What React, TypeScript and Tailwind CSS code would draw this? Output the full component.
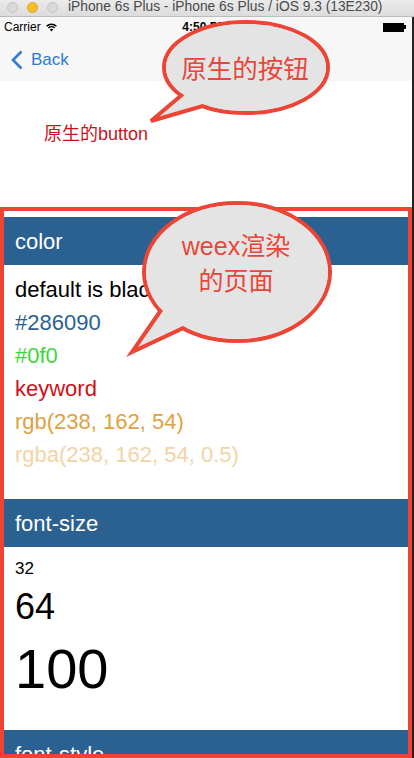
const sans = "font-['Liberation_Sans','Noto_Sans_CJK_SC',sans-serif]";

const colorRows = [
  { text: "default is black", cls: "text-black" },
  { text: "#286090", cls: "text-[#2b6190]" },
  { text: "#0f0", cls: "text-[#3ad83a]" },
  { text: "keyword", cls: "text-[#cf1018]" },
  { text: "rgb(238, 162, 54)", cls: "text-[#dfa142]" },
  { text: "rgba(238, 162, 54, 0.5)", cls: "text-[#f1d4a6]" },
];

const Header = ({ title }: { title: string }) => (
  <div className="h-[48px] bg-[#2b6190] text-white text-[22px] pl-[11px] flex items-center">
    {title}
  </div>
);

const Wifi = () => (
  <svg width="11" height="9" viewBox="0 0 11 9">
    <path d="M0.6 3.2 A7 7 0 0 1 10.4 3.2" stroke="black" strokeWidth="1.5" fill="none" />
    <path d="M2.4 5 A4.5 4.5 0 0 1 8.6 5" stroke="black" strokeWidth="1.5" fill="none" />
    <path d="M5.5 8.6 L3.8 6.6 A2.4 2.4 0 0 1 7.2 6.6 Z" fill="black" />
  </svg>
);

// speech bubbles drawn over the page (annotations)
const Bubbles = () => (
  <svg className="absolute left-0 top-0 pointer-events-none" width="414" height="758" viewBox="0 0 414 758">
    <g>
      <ellipse cx="246" cy="67.5" rx="82" ry="45.5" fill="#e4e4e4" stroke="#ec4535" strokeWidth="4" />
      <polygon points="190,88 151,121 210,104" fill="#e4e4e4" stroke="#ec4535" strokeWidth="4" strokeLinejoin="miter" />
      <ellipse cx="246" cy="67.5" rx="80" ry="43.5" fill="#e4e4e4" />
    </g>
    <g>
      <ellipse cx="237" cy="272" rx="93" ry="69" fill="#e4e4e4" stroke="#ec4535" strokeWidth="4" />
      <polygon points="168,300 132,352 196,322" fill="#e4e4e4" stroke="#ec4535" strokeWidth="4" strokeLinejoin="miter" />
      <ellipse cx="237" cy="272" rx="91" ry="67" fill="#e4e4e4" />
    </g>
  </svg>
);

export default function App() {
  return (
    <div className={`relative w-[414px] h-[758px] overflow-hidden bg-white ${sans}`}>
      {/* MAC TITLE BAR */}
      <div className="h-[17px] bg-gradient-to-b from-[#ebebeb] to-[#dcdcdc] border-b border-[#bcbcbc] flex items-start">
        <div className="h-[14px] flex items-center pl-[7px] gap-[9px]">
          <span className="w-[11px] h-[11px] rounded-full bg-[#d9d9d9] border border-[#c4c4c4]" />
          <span className="w-[11px] h-[11px] rounded-full bg-[#f4be2c] border border-[#dea624]" />
          <span className="w-[11px] h-[11px] rounded-full bg-[#d9d9d9] border border-[#c4c4c4]" />
          <span className="ml-[1px] text-[13.8px] leading-[14px] text-[#4a4a4a] whitespace-nowrap">
            iPhone 6s Plus - iPhone 6s Plus / iOS 9.3 (13E230)
          </span>
        </div>
      </div>

      <div className="flex">
        <div className="w-[412px] flex flex-col">
          {/* STATUS BAR */}
          <div className="h-[20px] bg-[#f7f7f7] flex items-center text-[12px] text-black">
            <div className="flex-1 flex items-center pl-[4px] gap-[5px]">
              <span>Carrier</span>
              <Wifi />
            </div>
            <div className="font-bold">4:50 PM</div>
            <div className="flex-1 flex justify-end items-center pr-[6px]">
              <div className="w-[21px] h-[9px] bg-black" />
              <div className="w-[2px] h-[4px] bg-black" />
            </div>
          </div>

          {/* NAV BAR */}
          <div className="h-[44px] bg-[#f7f7f7] flex items-center pl-[11px] pt-[2px] gap-[8px] text-[#2e7bd6]">
            <svg width="12" height="20" viewBox="0 0 12 20">
              <polyline points="10.5,1.5 2,10 10.5,18.5" fill="none" stroke="#2e7bd6" strokeWidth="2.6" />
            </svg>
            <span className="text-[17px]">Back</span>
          </div>

          {/* NATIVE AREA */}
          <div className="h-[126px] pl-[44px] pt-[42px]">
            <span className="text-[18px] leading-[18px] text-[#cc101c]">原生的button</span>
          </div>

          {/* WEEX AREA */}
          <div className="relative h-[551px] overflow-hidden px-[4px] pt-[10px]">
            <Header title="color" />
            <div className="pl-[11px] pt-[8px] pb-[28px] text-[22px] leading-[33px]">
              {colorRows.map((r) => (
                <div key={r.text} className={r.cls}>
                  {r.text}
                </div>
              ))}
            </div>
            <Header title="font-size" />
            <div className="pl-[11px] pt-[8px] pb-[22px] text-black">
              <div className="text-[17px] leading-[28px]">32</div>
              <div className="text-[36px] leading-[47px]">64</div>
              <div className="text-[56px] leading-[78px]">100</div>
            </div>
            <Header title="font-style" />
            <div className="absolute inset-0 border-4 border-[#ee4433] pointer-events-none" />
          </div>
        </div>
        <div className="w-[2px] bg-[#222222]" />
      </div>

      <Bubbles />
      <div className="absolute left-[245px] top-[69px] -translate-x-1/2 -translate-y-1/2 text-[25.5px] leading-[30px] text-[#e9463a] whitespace-nowrap">
        原生的按钮
      </div>
      <div className="absolute left-[236px] top-[264px] -translate-x-1/2 -translate-y-1/2 text-center text-[25px] leading-[35px] text-[#e9463a] whitespace-nowrap">
        <div>weex渲染</div>
        <div>的页面</div>
      </div>
    </div>
  );
}
